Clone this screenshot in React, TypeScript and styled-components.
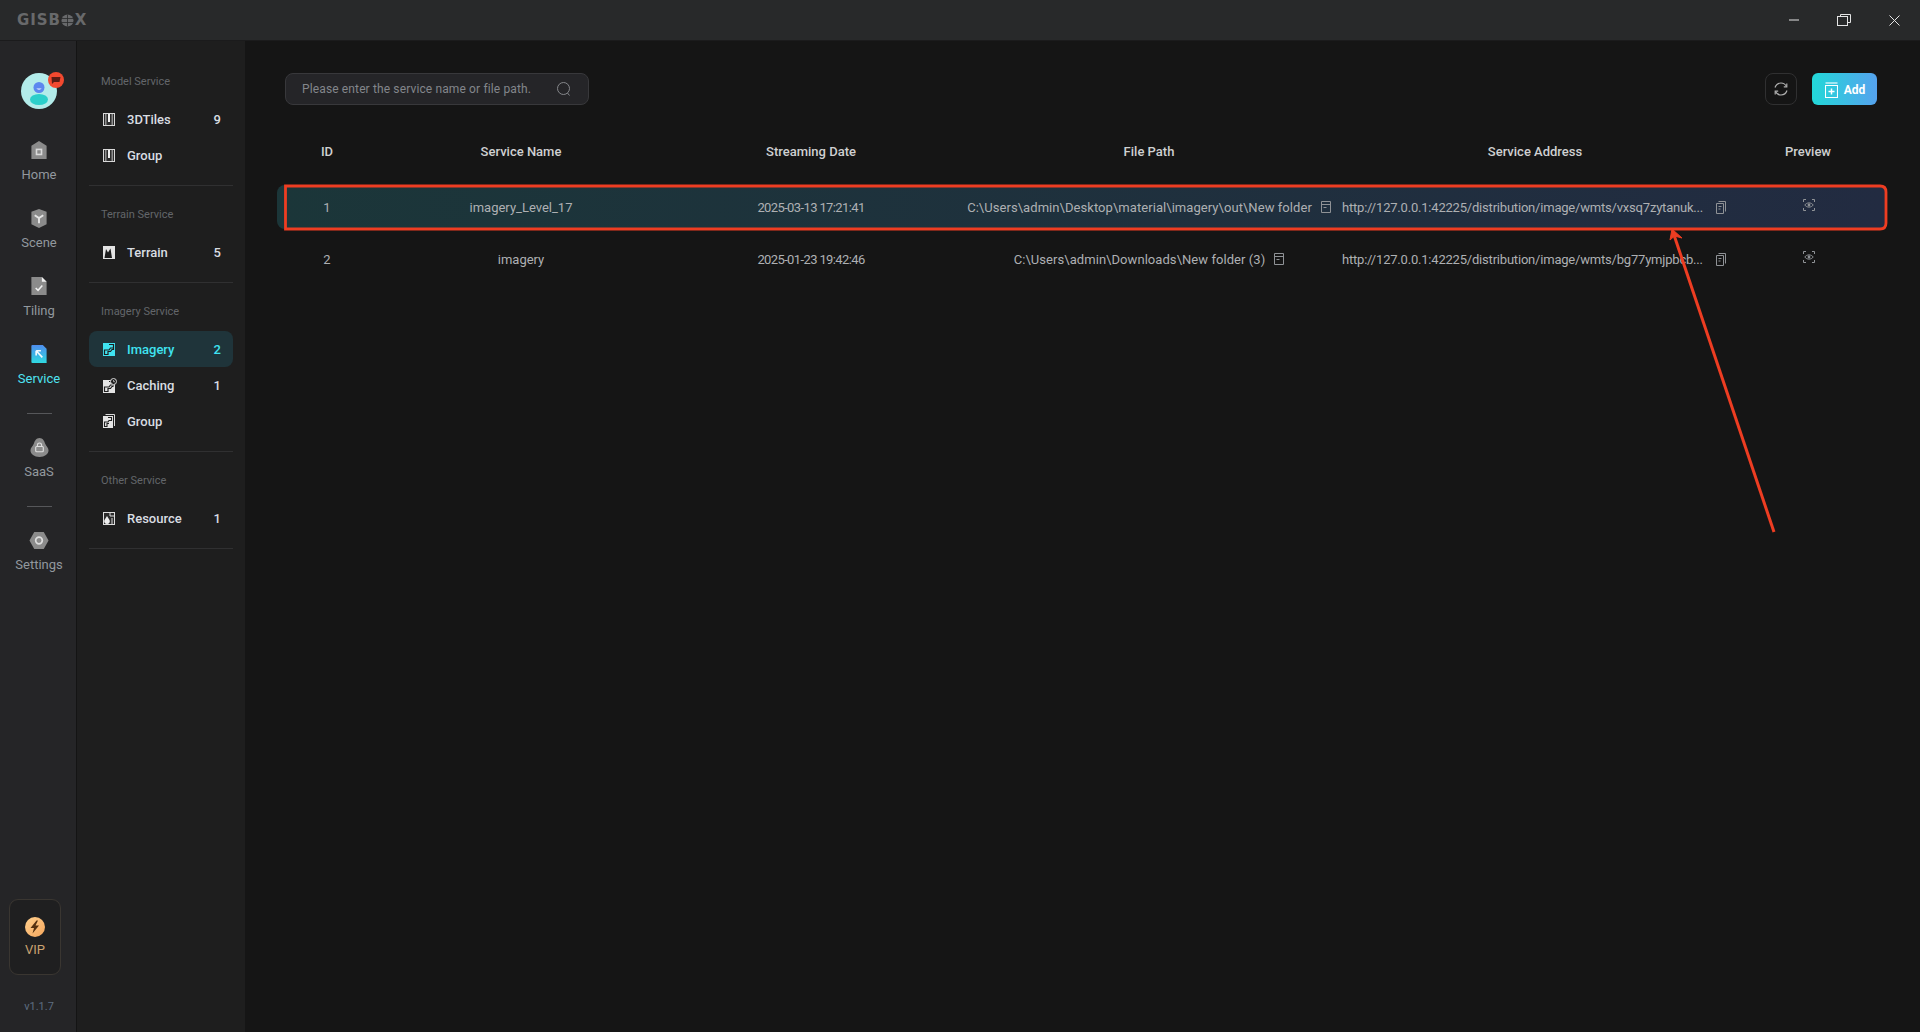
import React from "react";
import styled, { createGlobalStyle } from "styled-components";

const GlobalStyle = createGlobalStyle`
  html, body {
    margin: 0;
    padding: 0;
    background: #151515;
  }
  * {
    box-sizing: border-box;
  }
`;

const FONT = `Roboto, "Liberation Sans", sans-serif`;

const Page = styled.div`
  position: relative;
  width: 1920px;
  height: 1032px;
  overflow: hidden;
  display: flex;
  flex-direction: column;
  font-family: ${FONT};
  background: #151515;
`;

const TitleBar = styled.header`
  height: 41px;
  flex: none;
  display: flex;
  align-items: center;
  justify-content: space-between;
  padding-left: 17px;
  background: #28292a;
  border-bottom: 1px solid #1b1b1c;
`;

const Logo = styled.div`
  display: flex;
  align-items: center;
  font-family: "DejaVu Sans", sans-serif;
  font-weight: 700;
  font-size: 15px;
  letter-spacing: 0.9px;
  color: #68696b;
  line-height: 14px;
  svg {
    margin-right: 1px;
  }
`;

const WindowControls = styled.div`
  display: flex;
  align-items: center;
  height: 100%;
  padding-right: 20px;
  gap: 38px;
  svg {
    display: block;
  }
`;

const Body = styled.div`
  flex: 1;
  display: flex;
  min-height: 0;
`;

const Rail = styled.nav`
  width: 77px;
  flex: none;
  display: flex;
  flex-direction: column;
  align-items: center;
  padding: 32px 0 0 2px;
  background: #252527;
  border-right: 1px solid #141414;
`;

const AvatarWrap = styled.div`
  width: 36px;
  height: 36px;
  margin-bottom: 32px;
`;

const RailItem = styled.div<{ $active?: boolean }>`
  display: flex;
  flex-direction: column;
  align-items: center;
  gap: 7px;
  height: 42px;
  font-size: 13px;
  line-height: 16px;
  color: ${(p) => (p.$active ? "#4fe3f2" : "#92989e")};
  margin-bottom: 26px;
  svg {
    display: block;
  }
`;

const RailRule = styled.div`
  width: 25px;
  height: 1px;
  flex: none;
  background: #56575a;
  margin-bottom: 24px;
`;

const VipBox = styled.div`
  margin-top: auto;
  margin-right: 8px;
  width: 52px;
  height: 76px;
  display: flex;
  flex-direction: column;
  align-items: center;
  padding-top: 17px;
  gap: 5px;
  background: #1f1f20;
  border: 1px solid #3a3631;
  border-radius: 9px;
  color: #c9a271;
  font-size: 13px;
  line-height: 16px;
`;

const Version = styled.div`
  height: 57px;
  padding-top: 25px;
  font-size: 11px;
  line-height: 14px;
  color: #5e6d80;
`;

const SubNav = styled.aside`
  width: 168px;
  flex: none;
  padding: 33px 12px 0;
  background: #1e1e1e;
`;

const Section = styled.section`
  padding-bottom: 12px;
  margin-bottom: 21px;
  border-bottom: 1px solid #303031;
`;

const SectionTitle = styled.div`
  height: 16px;
  padding-left: 12px;
  font-size: 11px;
  line-height: 16px;
  color: #63666a;
  margin-bottom: 11px;
`;

const NavRow = styled.div<{ $active?: boolean }>`
  height: 36px;
  display: flex;
  align-items: center;
  padding: 0 12px 0 14px;
  border-radius: 8px;
  font-size: 13px;
  font-weight: 500;
  color: ${(p) => (p.$active ? "#3fe3f1" : "#d9dde2")};
  background: ${(p) => (p.$active ? "#1f343a" : "transparent")};
`;

const NavIcon = styled.span`
  width: 12px;
  flex: none;
  margin-right: 12px;
  display: flex;
  align-items: center;
  svg {
    display: block;
    flex: none;
  }
`;

const NavCount = styled.span`
  margin-left: auto;
`;

const Main = styled.main`
  flex: 1;
  min-width: 0;
  padding: 32px 33px 0 32px;
  background: #151515;
`;

const Toolbar = styled.div`
  height: 32px;
  display: flex;
  align-items: center;
  padding: 0 10px 0 8px;
`;

const SearchBox = styled.div`
  width: 304px;
  height: 32px;
  display: flex;
  align-items: center;
  justify-content: space-between;
  padding: 0 17px 0 16px;
  background: #252528;
  border: 1px solid #38383b;
  border-radius: 8px;
  font-size: 12px;
  letter-spacing: 0.13px;
  color: #83868b;
`;

const RefreshButton = styled.button`
  width: 32px;
  height: 32px;
  margin-left: auto;
  display: flex;
  align-items: center;
  justify-content: center;
  padding: 0;
  background: transparent;
  border: 1px solid #303031;
  border-radius: 8px;
`;

const AddButton = styled.button`
  width: 65px;
  height: 32px;
  margin-left: 15px;
  display: flex;
  align-items: center;
  justify-content: center;
  gap: 6px;
  padding: 1px 0 0 1px;
  border: none;
  border-radius: 6px;
  background: linear-gradient(90deg, #22d8d8, #55a2ee);
  color: #ffffff;
  font-family: ${FONT};
  font-size: 12px;
  font-weight: 700;
`;

const COLUMNS = "100px 288px 292px 384px 388px 158px";

const TableHead = styled.div`
  display: grid;
  grid-template-columns: ${COLUMNS};
  height: 44px;
  margin-top: 24px;
  margin-bottom: 12px;
  align-items: center;
  font-size: 13px;
  font-weight: 500;
  color: #cfd0d1;
  text-align: center;
`;

const Row = styled.div<{ $selected?: boolean }>`
  display: grid;
  grid-template-columns: ${COLUMNS};
  height: 44px;
  margin-bottom: 8px;
  align-items: center;
  border-radius: 8px;
  font-size: 13px;
  color: #aeb0b3;
  text-align: center;
  background: ${(p) =>
    p.$selected ? "linear-gradient(90deg, #1b3639, #222b41)" : "transparent"};
`;

const DateCell = styled.div`
  letter-spacing: -0.62px;
`;

const PathCell = styled.div`
  display: flex;
  align-items: center;
  justify-content: center;
  gap: 9px;
  letter-spacing: 0.06px;
  white-space: nowrap;
  svg {
    flex: none;
  }
`;

const AddressCell = styled.div`
  display: flex;
  align-items: center;
  gap: 12px;
  padding-left: 1px;
  svg {
    flex: none;
  }
`;

const AddressText = styled.span`
  width: 362px;
  flex: none;
  text-align: left;
  white-space: nowrap;
  overflow: hidden;
  letter-spacing: -0.2px;
`;

const PreviewCell = styled.div`
  display: flex;
  justify-content: center;
  margin-top: -4px;
  padding-left: 1px;
`;

const Annotation = styled.svg`
  position: absolute;
  left: 0;
  top: 0;
  pointer-events: none;
`;

const GREY = "#8b8b8b";

const HomeIcon = () => (
  <svg width="16" height="20" viewBox="0 0 16 20">
    <path d="M8 0 16 5V19H0V5Z" fill={GREY} />
    <rect x="4.5" y="8" width="7" height="7" fill="#dadada" />
    <rect x="6.2" y="9.7" width="3.6" height="3.6" fill={GREY} />
  </svg>
);

const SceneIcon = () => (
  <svg width="18" height="20" viewBox="0 0 18 20">
    <path d="M9 0 17 3V16L9 20 1 16V3Z" fill={GREY} />
    <path d="M4.5 6.5 9 9.5 13.5 6.5M9 9.5V15" fill="none" stroke="#e4e4e4" strokeWidth="2" />
  </svg>
);

const TilingIcon = () => (
  <svg width="16" height="20" viewBox="0 0 16 20">
    <path d="M0 0H11L16 5V19H0Z" fill={GREY} />
    <path d="M11 0 16 5H11Z" fill="#f0f0f0" />
    <path d="M4.5 11.5 7 14 11.5 9" fill="none" stroke="#f0f0f0" strokeWidth="1.6" />
  </svg>
);

const ServiceIcon = () => (
  <svg width="16" height="20" viewBox="0 0 16 20">
    <defs>
      <linearGradient id="service-fill" x1="0" y1="0" x2="0" y2="1">
        <stop offset="0" stopColor="#4f8dee" />
        <stop offset="1" stopColor="#2fd9e0" />
      </linearGradient>
    </defs>
    <path d="M1 0H12L16 4V19H1A1 1 0 0 1 0 18V1A1 1 0 0 1 1 0Z" fill="url(#service-fill)" />
    <path d="M5 6V11M5 6H10M5 6 11.5 13" fill="none" stroke="#f4fbff" strokeWidth="1.7" />
  </svg>
);

const SaasIcon = () => (
  <svg width="19" height="20" viewBox="0 0 19 20">
    <path d="M9.5 0C13 0 14.5 3 15.5 6 16.5 9 19 10 19 13 19 17 15 20 9.5 20 4 20 0 17 0 13 0 10 2.500 9 3.500 6 4.500 3 6 0 9.500 0Z" fill={GREY} />
    <rect x="5.500" y="9" width="8" height="5.500" rx="1" fill="none" stroke="#dddddd" strokeWidth="1.200" />
    <path d="M7.300 9V7.500A2.200 2.200 0 0 1 11.700 7.500V9" fill="none" stroke="#dddddd" strokeWidth="1.200" />
  </svg>
);

const SettingsIcon = () => (
  <svg width="20" height="20" viewBox="0 0 20 20">
    <path d="M5 1H15L20 10 15 19H5L0 10Z" fill={GREY} />
    <circle cx="10" cy="10" r="3.500" fill="none" stroke="#dddddd" strokeWidth="1.800" />
  </svg>
);

const Avatar = () => (
  <svg width="44" height="44" viewBox="0 0 44 44" style={{ overflow: "visible", marginTop: -1 }}>
    <circle cx="18" cy="19" r="18" fill="#b3ecea" />
    <ellipse cx="18" cy="27.500" rx="9" ry="5.500" fill="#2bcfca" />
    <circle cx="18" cy="15.500" r="5.500" fill="#5c87ef" />
    <path d="M15.500 16.500H20.500C20 18 16 18 15.500 16.500Z" fill="#eef4ff" />
    <circle cx="35" cy="8" r="8" fill="#f2492f" />
    <path d="M30.500 5H39.500L38.500 10H33L31 12Z" fill="#5a1c14" />
  </svg>
);

const VipIcon = () => (
  <svg width="20" height="20" viewBox="0 0 20 20">
    <defs>
      <linearGradient id="vip-fill" x1="0" y1="0" x2="1" y2="1">
        <stop offset="0" stopColor="#ffd08e" />
        <stop offset="1" stopColor="#f5a65c" />
      </linearGradient>
    </defs>
    <circle cx="10" cy="10" r="10" fill="url(#vip-fill)" />
    <path d="M11.500 3.500 5.500 11H9L7.500 16.500 14 8.500H10.500L13 3.500Z" fill="#54300f" />
  </svg>
);

const TileIcon = () => (
  <svg width="12" height="13" viewBox="0 0 12 13">
    <rect x="0.500" y="0.500" width="11" height="12" fill="#2c2c2c" stroke="#d9d9d9" />
    <rect x="2" y="1" width="1.500" height="11" fill="#8f8f8f" />
    <rect x="8.500" y="1" width="1.500" height="11" fill="#8f8f8f" />
    <rect x="5" y="1" width="2" height="8" fill="#f0f0f0" />
  </svg>
);

const TerrainIcon = () => (
  <svg width="12" height="13" viewBox="0 0 12 13">
    <rect width="12" height="13" fill="#e4e4e4" />
    <path d="M1.500 12 3 3 5 6.500 7.500 2.500 9 12Z" fill="#1d1d1d" />
  </svg>
);

const ImageryIcon = ({ color = "#e4e4e4" }: { color?: string }) => (
  <svg width="12" height="13" viewBox="0 0 12 13">
    <rect width="12" height="13" fill={color} />
    <path d="M6 1.500H10.500V5H7.500L6 7H1.500V11.500H5V8.500H7.500L9 6.500H10.500V5" fill="none" stroke="#1e1e1e" strokeWidth="1.200" />
  </svg>
);

const CachingIcon = () => (
  <svg width="14" height="15" viewBox="0 0 14 15">
    <rect y="2" width="12" height="13" fill="#e4e4e4" />
    <path d="M6 3.500H10.500V7H7.500L6 9H1.500V13.500H5V10.500H7.500L9 8.500H10.500" fill="none" stroke="#1e1e1e" strokeWidth="1.200" />
    <circle cx="10.500" cy="3.500" r="3" fill="#1e1e1e" stroke="#d9d9d9" />
    <path d="M10.500 2V3.700H12" fill="none" stroke="#d9d9d9" strokeWidth="0.700" />
  </svg>
);

const ImageGroupIcon = () => (
  <svg width="12" height="14" viewBox="0 0 12 14">
    <path d="M2.500 0.500H11.500V12" fill="none" stroke="#d9d9d9" />
    <rect y="2" width="10" height="12" fill="#e4e4e4" />
    <path d="M5 3.500H8.500V6.500H6L5 8H1.500V12.500H4V9.500H6" fill="none" stroke="#1e1e1e" strokeWidth="1.100" />
  </svg>
);

const ResourceIcon = () => (
  <svg width="12" height="13" viewBox="0 0 12 13">
    <rect x="0.500" y="0.500" width="11" height="12" fill="#2b2b2b" stroke="#dddddd" />
    <path d="M4 4 6.500 8A2.800 2.800 0 1 1 1.500 8Z" fill="#eeeeee" />
    <path d="M7 1V4H11M9 6V12" fill="none" stroke="#dddddd" />
  </svg>
);

const SearchIcon = () => (
  <svg width="14" height="14" viewBox="0 0 14 14" fill="none" stroke="#85878b" strokeWidth="1">
    <circle cx="6.500" cy="6.500" r="6" />
    <path d="M10.500 11 12.500 13.500" />
  </svg>
);

const RefreshIcon = () => (
  <svg width="14" height="14" viewBox="0 0 14 14" fill="none" stroke="#b0b0b0" strokeWidth="1.200">
    <path d="M1 5.500C2 2.500 4.500 1 7 1 9.500 1 11.500 2.500 12.500 4.500" />
    <path d="M13 8.500C12 11.500 9.500 13 7 13 4.500 13 2.500 11.500 1.500 9.500" />
    <path d="M12.800 1.500V4.800H9.800M1.200 12.500V9.200H4.200" />
  </svg>
);

const AddIcon = () => (
  <svg width="13" height="16" viewBox="0 0 13 16" fill="none" stroke="#ffffff" strokeWidth="1.100">
    <path d="M0.500 1H12.500" />
    <path d="M0.500 3.500H12.500V15.500H0.500Z" />
    <path d="M6.500 6.500V12.500M3.500 9.500H9.500" strokeWidth="1.500" />
  </svg>
);

const FileIcon = () => (
  <svg width="10" height="12" viewBox="0 0 10 12" fill="none" stroke="#8f9296">
    <path d="M0.500 0.500H9.500V11.500H0.500Z" />
    <path d="M0.500 3.500H9.500M2.500 6.500H5.500" />
  </svg>
);

const CopyIcon = () => (
  <svg width="10" height="13" viewBox="0 0 10 13" fill="none" stroke="#8f9296">
    <path d="M0.500 2.500H7.500V12.500H0.500Z" />
    <path d="M2.500 0.500H9.500V10.500" />
    <path d="M2.500 5.500H5.500M2.500 8H4.500" />
  </svg>
);

const PreviewIcon = () => (
  <svg width="12" height="12" viewBox="0 0 12 12" fill="none" stroke="#8f9296">
    <path d="M0.500 3V0.500H3M9 0.500H11.500V3M11.500 9V11.500H9M3 11.500H0.500V9" />
    <path d="M1.800 6C3.500 3.200 8.500 3.200 10.200 6 8.500 8.800 3.500 8.800 1.800 6Z" />
    <circle cx="6" cy="6" r="1.400" fill="#8f9296" stroke="none" />
  </svg>
);

type NavItem = { icon: React.ReactNode; label: string; count?: number; active?: boolean };

const sections: { title: string; items: NavItem[] }[] = [
  {
    title: "Model Service",
    items: [
      { icon: <TileIcon />, label: "3DTiles", count: 9 },
      { icon: <TileIcon />, label: "Group" },
    ],
  },
  {
    title: "Terrain Service",
    items: [{ icon: <TerrainIcon />, label: "Terrain", count: 5 }],
  },
  {
    title: "Imagery Service",
    items: [
      { icon: <ImageryIcon color="#3fe3f1" />, label: "Imagery", count: 2, active: true },
      { icon: <CachingIcon />, label: "Caching", count: 1 },
      { icon: <ImageGroupIcon />, label: "Group" },
    ],
  },
  {
    title: "Other Service",
    items: [{ icon: <ResourceIcon />, label: "Resource", count: 1 }],
  },
];

const rows = [
  {
    id: 1,
    name: "imagery_Level_17",
    date: "2025-03-13 17:21:41",
    path: "C:\\Users\\admin\\Desktop\\material\\imagery\\out\\New folder",
    address: "http://127.0.0.1:42225/distribution/image/wmts/vxsq7zytanuk...",
  },
  {
    id: 2,
    name: "imagery",
    date: "2025-01-23 19:42:46",
    path: "C:\\Users\\admin\\Downloads\\New folder (3)",
    address: "http://127.0.0.1:42225/distribution/image/wmts/bg77ymjpbcb...",
  },
];

export default function App() {
  return (
    <Page>
      <GlobalStyle />
      <TitleBar>
        <Logo>
          GISB
          <svg width="13" height="13" viewBox="0 0 13 13" fill="none" stroke="#68696b">
            <circle cx="6.500" cy="6.500" r="6" fill="#68696b" stroke="none" />
            <path d="M0.500 4.500H12.500M0.500 8.500H12.500M6.500 0.500V12.500" stroke="#28292a" strokeWidth="0.800" />
          </svg>
          X
        </Logo>
        <WindowControls>
          <svg width="10" height="2" viewBox="0 0 10 2">
            <rect y="0.500" width="10" height="1" fill="#e4e4e4" />
          </svg>
          <svg width="14" height="12" viewBox="0 0 14 12" fill="none" stroke="#e4e4e4">
            <path d="M3.500 2.500V0.500H13.500V8.500H10.500" />
            <rect x="0.500" y="2.500" width="10" height="9" />
          </svg>
          <svg width="11" height="11" viewBox="0 0 11 11" stroke="#e4e4e4">
            <path d="M0.500 0.500 10.500 10.500M10.500 0.500 0.500 10.500" />
          </svg>
        </WindowControls>
      </TitleBar>
      <Body>
        <Rail>
          <AvatarWrap>
            <Avatar />
          </AvatarWrap>
          <RailItem><HomeIcon />Home</RailItem>
          <RailItem><SceneIcon />Scene</RailItem>
          <RailItem><TilingIcon />Tiling</RailItem>
          <RailItem $active><ServiceIcon />Service</RailItem>
          <RailRule />
          <RailItem><SaasIcon />SaaS</RailItem>
          <RailRule />
          <RailItem><SettingsIcon />Settings</RailItem>
          <VipBox>
            <VipIcon />
            VIP
          </VipBox>
          <Version>v1.1.7</Version>
        </Rail>
        <SubNav>
          {sections.map((section) => (
            <Section key={section.title}>
              <SectionTitle>{section.title}</SectionTitle>
              {section.items.map((item) => (
                <NavRow key={item.label} $active={item.active}>
                  <NavIcon>{item.icon}</NavIcon>
                  {item.label}
                  {item.count !== undefined && <NavCount>{item.count}</NavCount>}
                </NavRow>
              ))}
            </Section>
          ))}
        </SubNav>
        <Main>
          <Toolbar>
            <SearchBox>
              Please enter the service name or file path.
              <SearchIcon />
            </SearchBox>
            <RefreshButton><RefreshIcon /></RefreshButton>
            <AddButton><AddIcon />Add</AddButton>
          </Toolbar>
          <TableHead>
            <div>ID</div>
            <div>Service Name</div>
            <div>Streaming Date</div>
            <div>File Path</div>
            <div>Service Address</div>
            <div>Preview</div>
          </TableHead>
          {rows.map((row, i) => (
            <Row key={row.id} $selected={i === 0}>
              <div>{row.id}</div>
              <div>{row.name}</div>
              <DateCell>{row.date}</DateCell>
              <PathCell>{row.path}<FileIcon /></PathCell>
              <AddressCell>
                <AddressText>{row.address}</AddressText>
                <CopyIcon />
              </AddressCell>
              <PreviewCell><PreviewIcon /></PreviewCell>
            </Row>
          ))}
        </Main>
      </Body>
      <Annotation width="1920" height="1032" viewBox="0 0 1920 1032" fill="none" stroke="#ee3d22">
        <path d="M285.500 186H1880Q1886 186 1886 192V223Q1886 229 1880 229H285.500Z" strokeWidth="2.800" />
        <path d="M1774 532 1673 232" strokeWidth="3" />
        <path d="M1672 229 1682 238 1674.500 236 1670 240Z" fill="#ee3d22" strokeWidth="1" />
      </Annotation>
    </Page>
  );
}
